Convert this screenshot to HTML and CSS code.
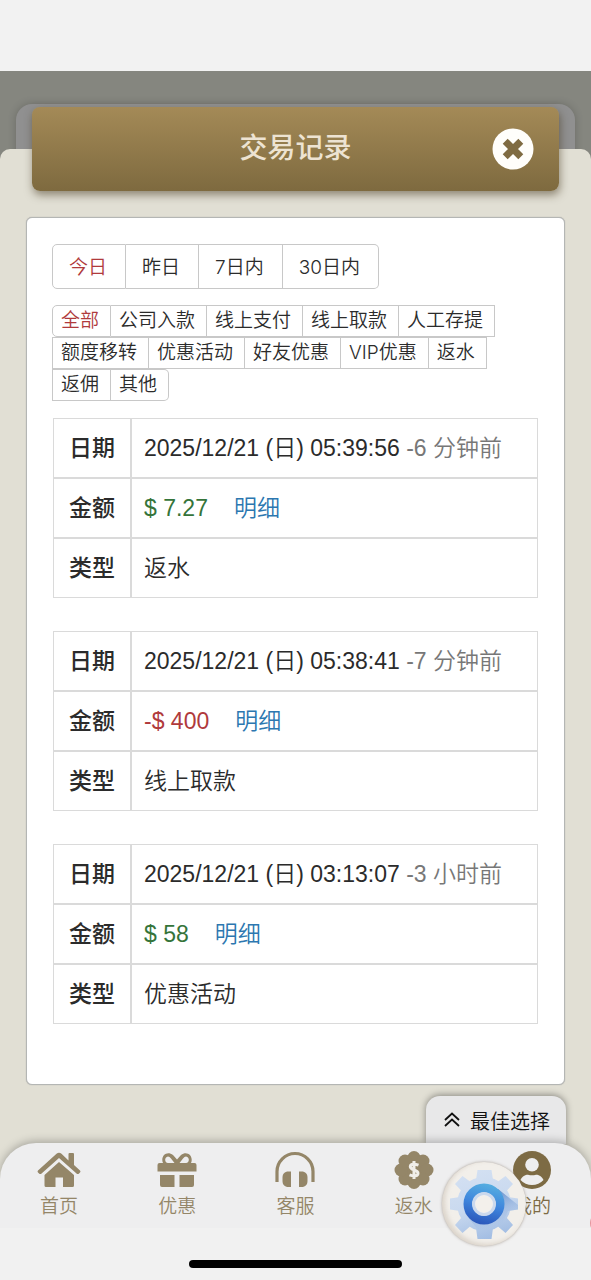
FILE: index.html
```html
<!DOCTYPE html>
<html lang="zh-CN">
<head>
<meta charset="utf-8">
<meta name="viewport" content="width=device-width, initial-scale=1">
<title>交易记录</title>
<link rel="stylesheet" href="styles.css">
</head>
<body>
<div class="app">
  <div class="status-space"></div>
  <main class="stage">
    <div class="sheet-back"></div>
    <header class="title-bar">
      <h1 class="title">交易记录</h1>
      <button class="close" type="button" aria-label="关闭">
        <svg viewBox="0 0 42 42" width="42" height="42"><circle cx="21" cy="21" r="20.5" fill="#fffefb"/><path d="M13.200 13.200l15.600 15.600M28.800 13.200L13.200 28.800" stroke="#7f6b42" stroke-width="7"/></svg>
      </button>
    </header>
    <section class="panel">
      <div class="card">
        <div class="ranges">
          <button class="range active" type="button">今日</button>
          <button class="range" type="button">昨日</button>
          <button class="range" type="button">7日内</button>
          <button class="range" type="button">30日内</button>
        </div>
        <div class="kinds">
          <button class="kind active" type="button">全部</button>
          <button class="kind" type="button">公司入款</button>
          <button class="kind" type="button">线上支付</button>
          <button class="kind" type="button">线上取款</button>
          <button class="kind" type="button">人工存提</button>
          <button class="kind row-start" type="button">额度移转</button>
          <button class="kind" type="button">优惠活动</button>
          <button class="kind" type="button">好友优惠</button>
          <button class="kind" type="button">VIP优惠</button>
          <button class="kind" type="button">返水</button>
          <button class="kind row-start" type="button">返佣</button>
          <button class="kind" type="button">其他</button>
        </div>
        <div class="records">
          <table class="record">
            <tr><th scope="row">日期</th><td>2025/12/21 (日) 05:39:56 <span class="ago">-6 分钟前</span></td></tr>
            <tr><th scope="row">金额</th><td><span class="plus">$ 7.27</span><a class="detail" href="#">明细</a></td></tr>
            <tr><th scope="row">类型</th><td>返水</td></tr>
          </table>
          <table class="record">
            <tr><th scope="row">日期</th><td>2025/12/21 (日) 05:38:41 <span class="ago">-7 分钟前</span></td></tr>
            <tr><th scope="row">金额</th><td><span class="minus">-$ 400</span><a class="detail" href="#">明细</a></td></tr>
            <tr><th scope="row">类型</th><td>线上取款</td></tr>
          </table>
          <table class="record">
            <tr><th scope="row">日期</th><td>2025/12/21 (日) 03:13:07 <span class="ago">-3 小时前</span></td></tr>
            <tr><th scope="row">金额</th><td><span class="plus">$ 58</span><a class="detail" href="#">明细</a></td></tr>
            <tr><th scope="row">类型</th><td>优惠活动</td></tr>
          </table>
        </div>
      </div>
    </section>
  </main>
  <footer class="dock">
    <button class="best" type="button">
      <svg viewBox="0 0 16 16" width="16" height="16" fill="none" stroke="#111" stroke-width="1.8"><path d="M1 8 8 1.500 15 8M1 14 8 7.500l7 6.500"/></svg>
      最佳选择
    </button>
    <nav class="nav">
      <a class="nav-item" href="#">
        <svg viewBox="0 0 44 38" width="44" height="38" fill="#948668"><path d="M22 11 37 24v10.500a1.500 1.500 0 0 1-1.500 1.500H26v-9.500h-7.500V36h-9.500a1.500 1.500 0 0 1-1.500-1.500V24z"/><path d="M31.500 9.500V3a1 1 0 0 1 1-1H36a1 1 0 0 1 1 1v11l6 5.500q1 1 0 2l-1.200 1.200q-1 .8-2 0L22 7 4.300 22.700q-1 .8-2 0L1 21.500q-1-1 0-2L19.500 2.700q2.500-2 5 0z"/></svg>
        <span>首页</span>
      </a>
      <a class="nav-item" href="#">
        <svg viewBox="0 0 44 38" width="44" height="38" fill="#948668"><path d="M8 12C5 5 12-1 18 4l4 4.500L26 4c6-5 13 1 10 8h3.500a2 2 0 0 1 2 2v6.500h-39V14a2 2 0 0 1 2-2zM13 5.500c-4 .5-3.500 6.500 0 6.500h6.500l-3.500-4.500Q14.500 5.500 13 5.500zm18 0q-1.500 0-3 2L24.500 12H31c3.500 0 4-6 0-6.500z" fill-rule="evenodd"/><path d="M5 24h14.500v12H7a2 2 0 0 1-2-2zM24.500 24H39v10a2 2 0 0 1-2 2H24.500z"/></svg>
        <span>优惠</span>
      </a>
      <a class="nav-item" href="#">
        <svg viewBox="0 0 44 38" width="44" height="38" fill="#948668"><path d="M4 31V20.500a18 18 0 0 1 36 0V31" fill="none" stroke="#948668" stroke-width="3.200"/><path d="M18 20.500V36h-2.500C11.500 36 9.500 33.500 9.500 30v-3.500c0-3.500 2-6 6-6zM26 20.500V36h2.500c4 0 6-2.500 6-6v-3.500c0-3.500-2-6-6-6z"/></svg>
        <span>客服</span>
      </a>
      <a class="nav-item" href="#">
        <svg viewBox="0 0 44 38" width="44" height="38" fill="#948668"><circle cx="22" cy="19" r="15.500"/><circle cx="22" cy="6.500" r="6.500"/><circle cx="31" cy="10" r="6.500"/><circle cx="35" cy="19" r="6.500"/><circle cx="31" cy="28" r="6.500"/><circle cx="22" cy="31.500" r="6.500"/><circle cx="13" cy="28" r="6.500"/><circle cx="9" cy="19" r="6.500"/><circle cx="13" cy="10" r="6.500"/><path d="M26.500 14.200C22 12.500 18.300 13 18.300 15.800c0 3.600 7.700 2.700 7.700 6.400 0 3.200-4.500 3.200-8.500 1.600M22 10v18" fill="none" stroke="#f0eee9" stroke-width="3"/></svg>
        <span>返水</span>
      </a>
      <a class="nav-item current" href="#">
        <svg viewBox="0 0 44 38" width="44" height="38"><circle cx="22" cy="19" r="19" fill="#7d6b44"/><circle cx="22" cy="13.800" r="6.800" fill="#eeeeef"/><path d="M10.500 29C12 25 16 23.500 18 23.700q4 1.300 8 0c2-.2 6 1.300 7.500 5.300a15.500 15.500 0 0 1-23 0z" fill="#eeeeef"/></svg>
        <span>我的</span>
      </a>
    </nav>
    <div class="home-area"><div class="home-bar"></div></div>
    <i class="edge-tip"></i>
    <button class="gear" type="button" aria-label="设置">
      <svg viewBox="0 0 84 84" width="84" height="84">
        <defs>
          <linearGradient id="cog" gradientUnits="userSpaceOnUse" x1="30" y1="8" x2="52" y2="78"><stop offset="0" stop-color="#d3e0f2"/><stop offset="0.500" stop-color="#c9d9ef"/><stop offset="1" stop-color="#9fbbe2"/></linearGradient>
          <linearGradient id="ring" gradientUnits="userSpaceOnUse" x1="48" y1="22" x2="38" y2="62"><stop offset="0" stop-color="#55aee0"/><stop offset="0.500" stop-color="#3f86dd"/><stop offset="1" stop-color="#2a57bb"/></linearGradient>
          <linearGradient id="shade" gradientUnits="userSpaceOnUse" x1="54" y1="30" x2="66" y2="62"><stop offset="0" stop-color="#4f7fc6" stop-opacity="0.800"/><stop offset="1" stop-color="#b3caea" stop-opacity="0.100"/></linearGradient>
        </defs>
        <g fill="url(#cog)">
          <circle cx="42" cy="42" r="27"/>
          <path d="M34 18 35.500 8h14L51 18zM34 66l1.500 11h14L51 66zM18 35 8 36.500v11L18 49zM66 35l10 1.500v11L66 49z"/>
          <path d="M28 19.500 20.500 14 13 22l7 7.500zM56 19.500l7.500-5.500 7.500 8-7 7.500zM28 64.500 20.500 71 13 63l7-8zM56 64.500l7.500 6.500 7.500-8-7-8z"/>
        </g>
        <path d="M56 27 76 43v4.500l-10 1.500-6 13-10 4-14 2-13-17z" fill="url(#shade)"/>
        <circle cx="42" cy="42" r="16" fill="#eeeff2" stroke="url(#ring)" stroke-width="9"/>
        <circle cx="42" cy="42" r="10.500" fill="none" stroke="#cbd9ed" stroke-width="3"/>
        <circle cx="42" cy="42" r="8.500" fill="#f3f0eb"/>
      </svg>
    </button>
  </footer>
</div>
</body>
</html>
```
FILE: styles.css
```css
* { box-sizing: border-box; }

body {
  margin: 0;
  background: #f2f2f2;
  color: #2b2b2b;
  font-family: "Liberation Sans", "Noto Sans CJK SC", sans-serif;
  font-weight: 350;
}

button { font: inherit; color: inherit; cursor: pointer; }
svg { display: block; }

.app { display: flex; flex-direction: column; min-height: 100vh; overflow: hidden; }
.status-space { height: 71px; background: #f2f2f2; }

.stage {
  position: relative;
  flex: 1;
  display: flex;
  flex-direction: column;
  padding-top: 36px;
  background: #85867f;
}

.sheet-back {
  position: absolute;
  top: 33px;
  left: 16px;
  right: 16px;
  height: 80px;
  border-radius: 16px;
  background: #909090;
  box-shadow: 0 0 8px rgba(0, 0, 0, 0.2);
}

.title-bar {
  position: relative;
  z-index: 2;
  display: grid;
  grid-template-columns: 42px 1fr 42px;
  align-items: center;
  height: 84px;
  margin: 0 32px;
  padding: 0 25px;
  border-radius: 8px;
  background: linear-gradient(#a48a57, #7e6a3f);
  box-shadow: 1px 4px 8px rgba(60, 45, 20, 0.5);
}

.title {
  grid-column: 2;
  margin: 0;
  color: #ede3d2;
  font-size: 28px;
  font-weight: 500;
  line-height: 40px;
  text-align: center;
}

.close { padding: 0; border: 0; background: none; }

.panel {
  position: relative;
  z-index: 1;
  flex: 1;
  margin-top: -42px;
  padding: 68px 26px 98px;
  border-radius: 10px 10px 0 0;
  background: #e1dfd4;
}

.card {
  padding: 26px 25px 60px;
  border: 1px solid #b4b6b4;
  border-radius: 6px;
  background: #fff;
  box-shadow: 0 0 1px #999;
}

.ranges, .kinds {
  display: flex;
  flex-wrap: wrap;
  font-family: Inter, "Noto Sans CJK SC", sans-serif;
  font-size: 19px;
}

.range, .kind {
  border: 1px solid #c8c8c8;
  border-left-width: 0;
  background: #fff;
}

.range { height: 45px; padding: 0 18px 2px 16px; }
.range:first-child { border-left-width: 1px; border-radius: 5px 0 0 5px; }
.range:last-child { border-radius: 0 5px 5px 0; }

.kinds { margin-top: 16px; }
.kind { height: 32px; padding: 0 11px 0 8px; line-height: 30px; }
.kind:first-child { border-left-width: 1px; border-radius: 5px 0 0 5px; }
.kind:last-child { border-radius: 0 5px 5px 0; }
.row-start { border-left-width: 1px; }
.active { color: #b03a3c; }

.records { display: grid; gap: 33px; padding: 17px 1px 0; }

.record {
  width: 100%;
  border-spacing: 0;
  font-size: 23px;
  line-height: 30px;
}

.record th, .record td {
  height: 60px;
  padding: 0 12px;
  border: 1px solid #dadada;
  text-align: left;
  white-space: nowrap;
}

.record th { width: 78px; padding: 0; font-weight: 500; text-align: center; }
.ago { color: #777; }
.plus { color: #35743a; }
.minus { color: #b03a3c; }
.detail { margin-left: 26px; color: #2c77b0; text-decoration: none; }

.dock { position: relative; z-index: 3; margin-top: -40px; }

.best {
  position: absolute;
  right: 25px;
  bottom: 100%;
  display: flex;
  align-items: center;
  gap: 10px;
  height: 48px;
  margin-bottom: -1px;
  padding: 0 16px 0 18px;
  border: 0;
  border-radius: 14px 14px 0 0;
  background: #e8e8e9;
  box-shadow: 0 -1px 7px rgba(0, 0, 0, 0.4);
  color: #111;
  font-size: 20px;
  white-space: nowrap;
}

.nav {
  position: relative;
  display: grid;
  grid-template-columns: repeat(5, 1fr);
  height: 85px;
  padding-top: 8px;
  border-radius: 36px 36px 0 0;
  background: #eeeeef;
  box-shadow: 0 -2px 8px rgba(0, 0, 0, 0.25);
}

.nav-item {
  display: flex;
  flex-direction: column;
  align-items: center;
  gap: 4px;
  color: #948668;
  font-size: 19px;
  line-height: 28px;
  text-decoration: none;
}

.current { color: #7d6b44; }

.home-area {
  position: relative;
  display: flex;
  justify-content: center;
  height: 52px;
  padding-top: 32px;
  background: #f1f1f1;
}

.home-bar { width: 36%; height: 8px; border-radius: 4px; background: #000; }

.gear {
  position: absolute;
  top: 19px;
  right: 65px;
  width: 84px;
  height: 84px;
  padding: 0;
  border: 0;
  border-radius: 50%;
  background: #f2efea;
  box-shadow: 0 0 3px rgba(120, 105, 90, 0.6), inset 3px -2px 4px rgba(180, 165, 150, 0.35);
}

.edge-tip {
  position: absolute;
  top: 72px;
  right: -9px;
  width: 10px;
  height: 16px;
  border-radius: 50%;
  background: #e5939b;
}
```
